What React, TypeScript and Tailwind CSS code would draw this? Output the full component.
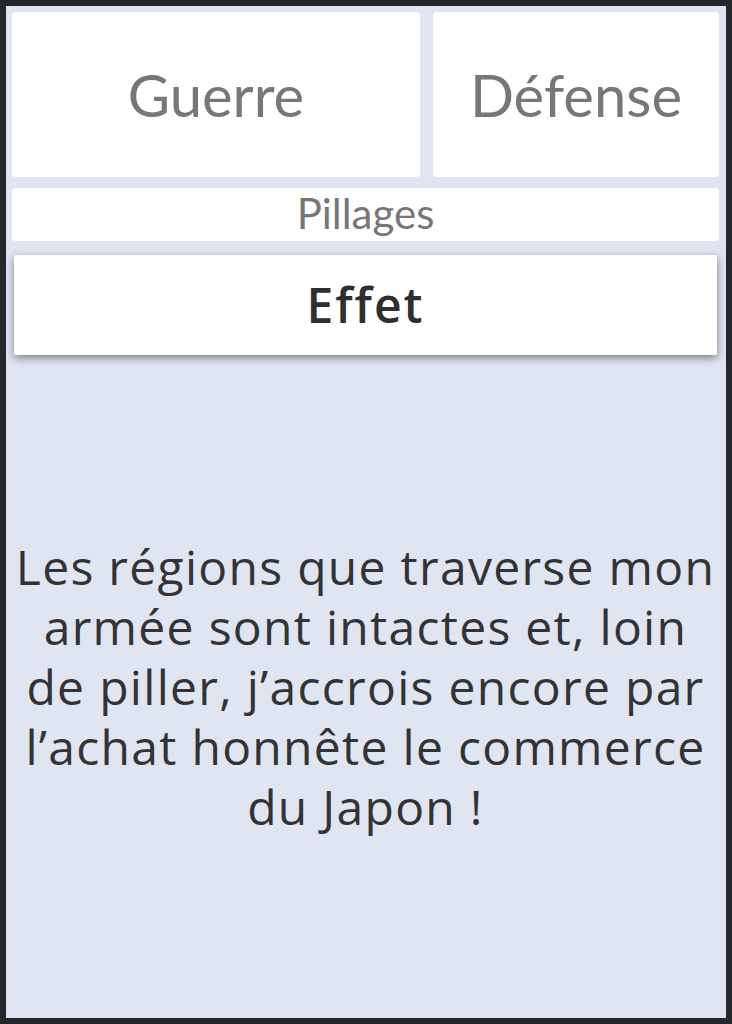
export default function App() {
  return (
    <div className="w-[732px] h-[1024px] bg-[#25272b] p-[6px]">
      <div className="h-full flex flex-col bg-[#dfe5f1] pt-[6px] pl-[6px] pr-[7px]">
        <div className="flex gap-[13px] h-[165px]">
          <div className="w-[408px] bg-white rounded-[4px] flex items-center justify-center text-[#777777] text-[58px] font-['Lato',sans-serif]">
            Guerre
          </div>
          <div className="flex-1 bg-white rounded-[4px] flex items-center justify-center text-[#777777] text-[58px] font-['Lato',sans-serif]">
            Défense
          </div>
        </div>
        <div className="mt-[11px] h-[53px] pb-[3px] bg-white rounded-[4px] flex items-center justify-center text-[#777777] text-[42px] leading-none font-['Lato',sans-serif]">
          Pillages
        </div>
        <div className="mt-[14px] mx-[2px] h-[100px] bg-white rounded-[2px] shadow-[0_3px_8px_rgba(0,0,0,0.45)] flex items-center justify-center text-[#2f2f2f] text-[48px] tracking-[2px] font-semibold font-['Open_Sans',sans-serif]">
          Effet
        </div>
        <div className="flex-1 flex items-center justify-center">
          <p className="text-center text-[#333333] text-[48px] leading-[60px] tracking-[1.3px] whitespace-nowrap font-['Open_Sans',sans-serif]">
            Les régions que traverse mon
            <br />
            armée sont intactes et, loin
            <br />
            de piller, j’accrois encore par
            <br />
            l’achat honnête le commerce
            <br />
            du Japon !
          </p>
        </div>
      </div>
    </div>
  );
}
